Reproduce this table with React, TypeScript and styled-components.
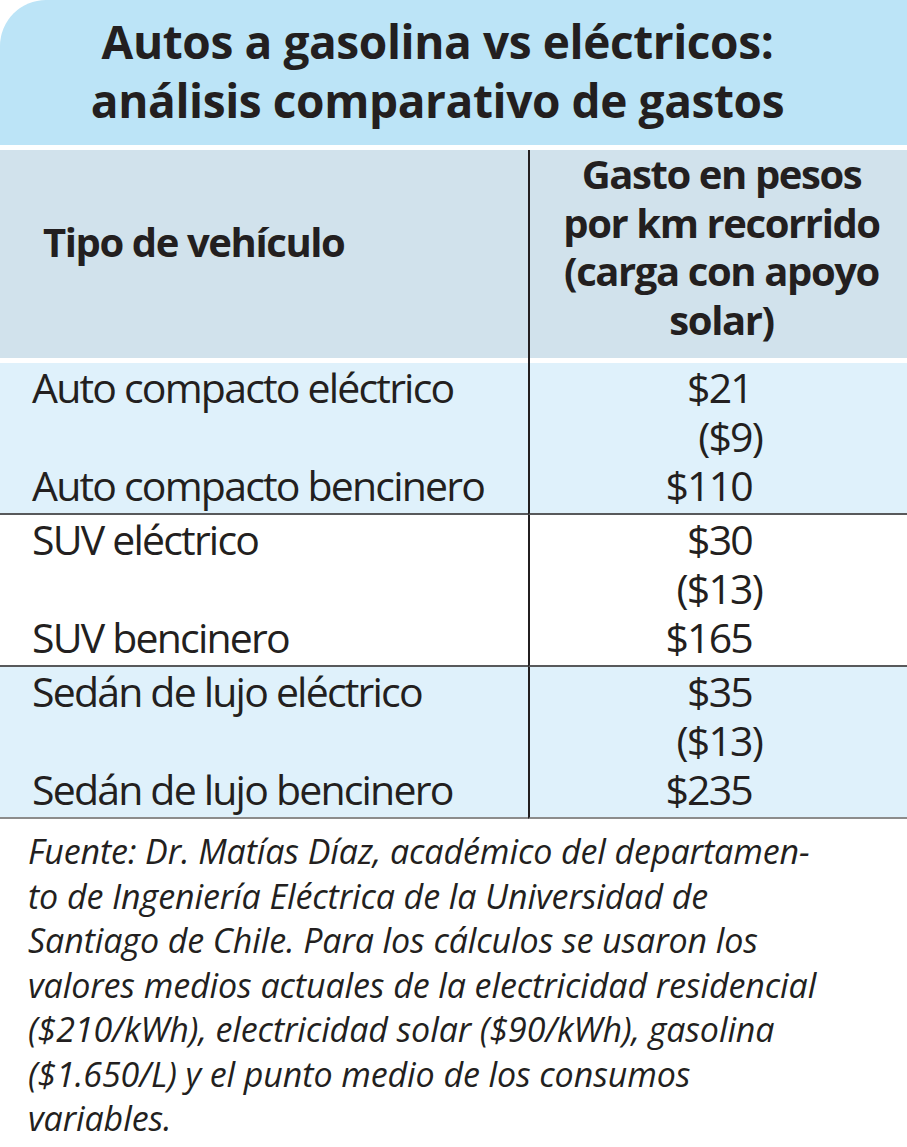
import React from "react";
import styled, { createGlobalStyle } from "styled-components";

const GlobalStyle = createGlobalStyle`
  html, body {
    margin: 0;
    padding: 0;
    background: #ffffff;
  }
  body {
    font-family: "Open Sans", "Noto Sans", sans-serif;
    color: #231f20;
  }
`;

const Page = styled.main`
  width: 907px;
  min-height: 1147px;
  background: #ffffff;
`;

const TitleBand = styled.header`
  background: #bce4f7;
  border-top-left-radius: 46px;
  padding: 12px 32px 15px 0;
  text-align: center;
`;

const Title = styled.h1`
  margin: 0;
  font-size: 46px;
  line-height: 59px;
  font-weight: 700;
  letter-spacing: -0.4px;
`;

const Table = styled.section`
  margin-top: 5px;
  display: grid;
  grid-template-columns: 528px 1fr;
`;

const HeadCell = styled.div<{ $right?: boolean }>`
  box-sizing: border-box;
  height: 213px;
  background: #d1e2ec;
  box-shadow: inset 0 -5px 0 #ffffff;
  font-size: 40px;
  line-height: 48.5px;
  font-weight: 700;
  letter-spacing: -1.4px;
  padding: ${(p) => (p.$right ? "0 0 0 6px" : "68px 0 0 43px")};
  text-align: ${(p) => (p.$right ? "center" : "left")};
  border-left: ${(p) => (p.$right ? "2px solid #231f20" : "none")};
`;

const GroupCell = styled.div<{ $tint: boolean; $last?: boolean; $right?: boolean }>`
  box-sizing: border-box;
  height: 152px;
  background: ${(p) => (p.$tint ? "#dff1fb" : "#ffffff")};
  border-bottom: 2px solid ${(p) => (p.$last ? "#8c8c8c" : "#58595b")};
  border-left: ${(p) => (p.$right ? "2px solid #231f20" : "none")};
  padding: ${(p) => (p.$right ? "0 155px 0 0" : "0 0 0 32px")};
  text-align: ${(p) => (p.$right ? "right" : "left")};
  font-size: 41px;
  line-height: 49px;
  letter-spacing: -1.8px;
`;

const Line = styled.div<{ $hang?: boolean }>`
  height: 49px;
  white-space: nowrap;
  margin-right: ${(p) => (p.$hang ? "-10px" : "0")};
`;

const Footer = styled.footer`
  padding: 10px 0 0 28px;
  font-style: italic;
  font-size: 34px;
  line-height: 44.5px;
  letter-spacing: -0.1px;
`;

const FootLine = styled.span`
  display: block;
  white-space: nowrap;
`;

type Group = {
  electric: string;
  gas: string;
  electricCost: string;
  solarCost: string;
  gasCost: string;
};

const groups: Group[] = [
  {
    electric: "Auto compacto eléctrico",
    gas: "Auto compacto bencinero",
    electricCost: "$21",
    solarCost: "($9)",
    gasCost: "$110",
  },
  {
    electric: "SUV eléctrico",
    gas: "SUV bencinero",
    electricCost: "$30",
    solarCost: "($13)",
    gasCost: "$165",
  },
  {
    electric: "Sedán de lujo eléctrico",
    gas: "Sedán de lujo bencinero",
    electricCost: "$35",
    solarCost: "($13)",
    gasCost: "$235",
  },
];

const footLines = [
  "Fuente: Dr. Matías Díaz, académico del departamen-",
  "to de Ingeniería Eléctrica de la Universidad de",
  "Santiago de Chile. Para los cálculos se usaron los",
  "valores medios actuales de la electricidad residencial",
  "($210/kWh), electricidad solar ($90/kWh), gasolina",
  "($1.650/L) y el punto medio de los consumos",
  "variables.",
];

export default function App() {
  return (
    <Page>
      <GlobalStyle />
      <TitleBand>
        <Title>
          Autos a gasolina vs eléctricos:
          <br />
          análisis comparativo de gastos
        </Title>
      </TitleBand>
      <Table>
        <HeadCell>Tipo de vehículo</HeadCell>
        <HeadCell $right>
          Gasto en pesos
          <br />
          por km recorrido
          <br />
          (carga con apoyo
          <br />
          solar)
        </HeadCell>
        {groups.map((g, i) => {
          const tint = i % 2 === 0;
          const last = i === groups.length - 1;
          return (
            <React.Fragment key={g.electric}>
              <GroupCell $tint={tint} $last={last}>
                <Line>{g.electric}</Line>
                <Line />
                <Line>{g.gas}</Line>
              </GroupCell>
              <GroupCell $tint={tint} $last={last} $right>
                <Line>{g.electricCost}</Line>
                <Line $hang>{g.solarCost}</Line>
                <Line>{g.gasCost}</Line>
              </GroupCell>
            </React.Fragment>
          );
        })}
      </Table>
      <Footer>
        {footLines.map((l) => (
          <FootLine key={l}>{l}</FootLine>
        ))}
      </Footer>
    </Page>
  );
}
